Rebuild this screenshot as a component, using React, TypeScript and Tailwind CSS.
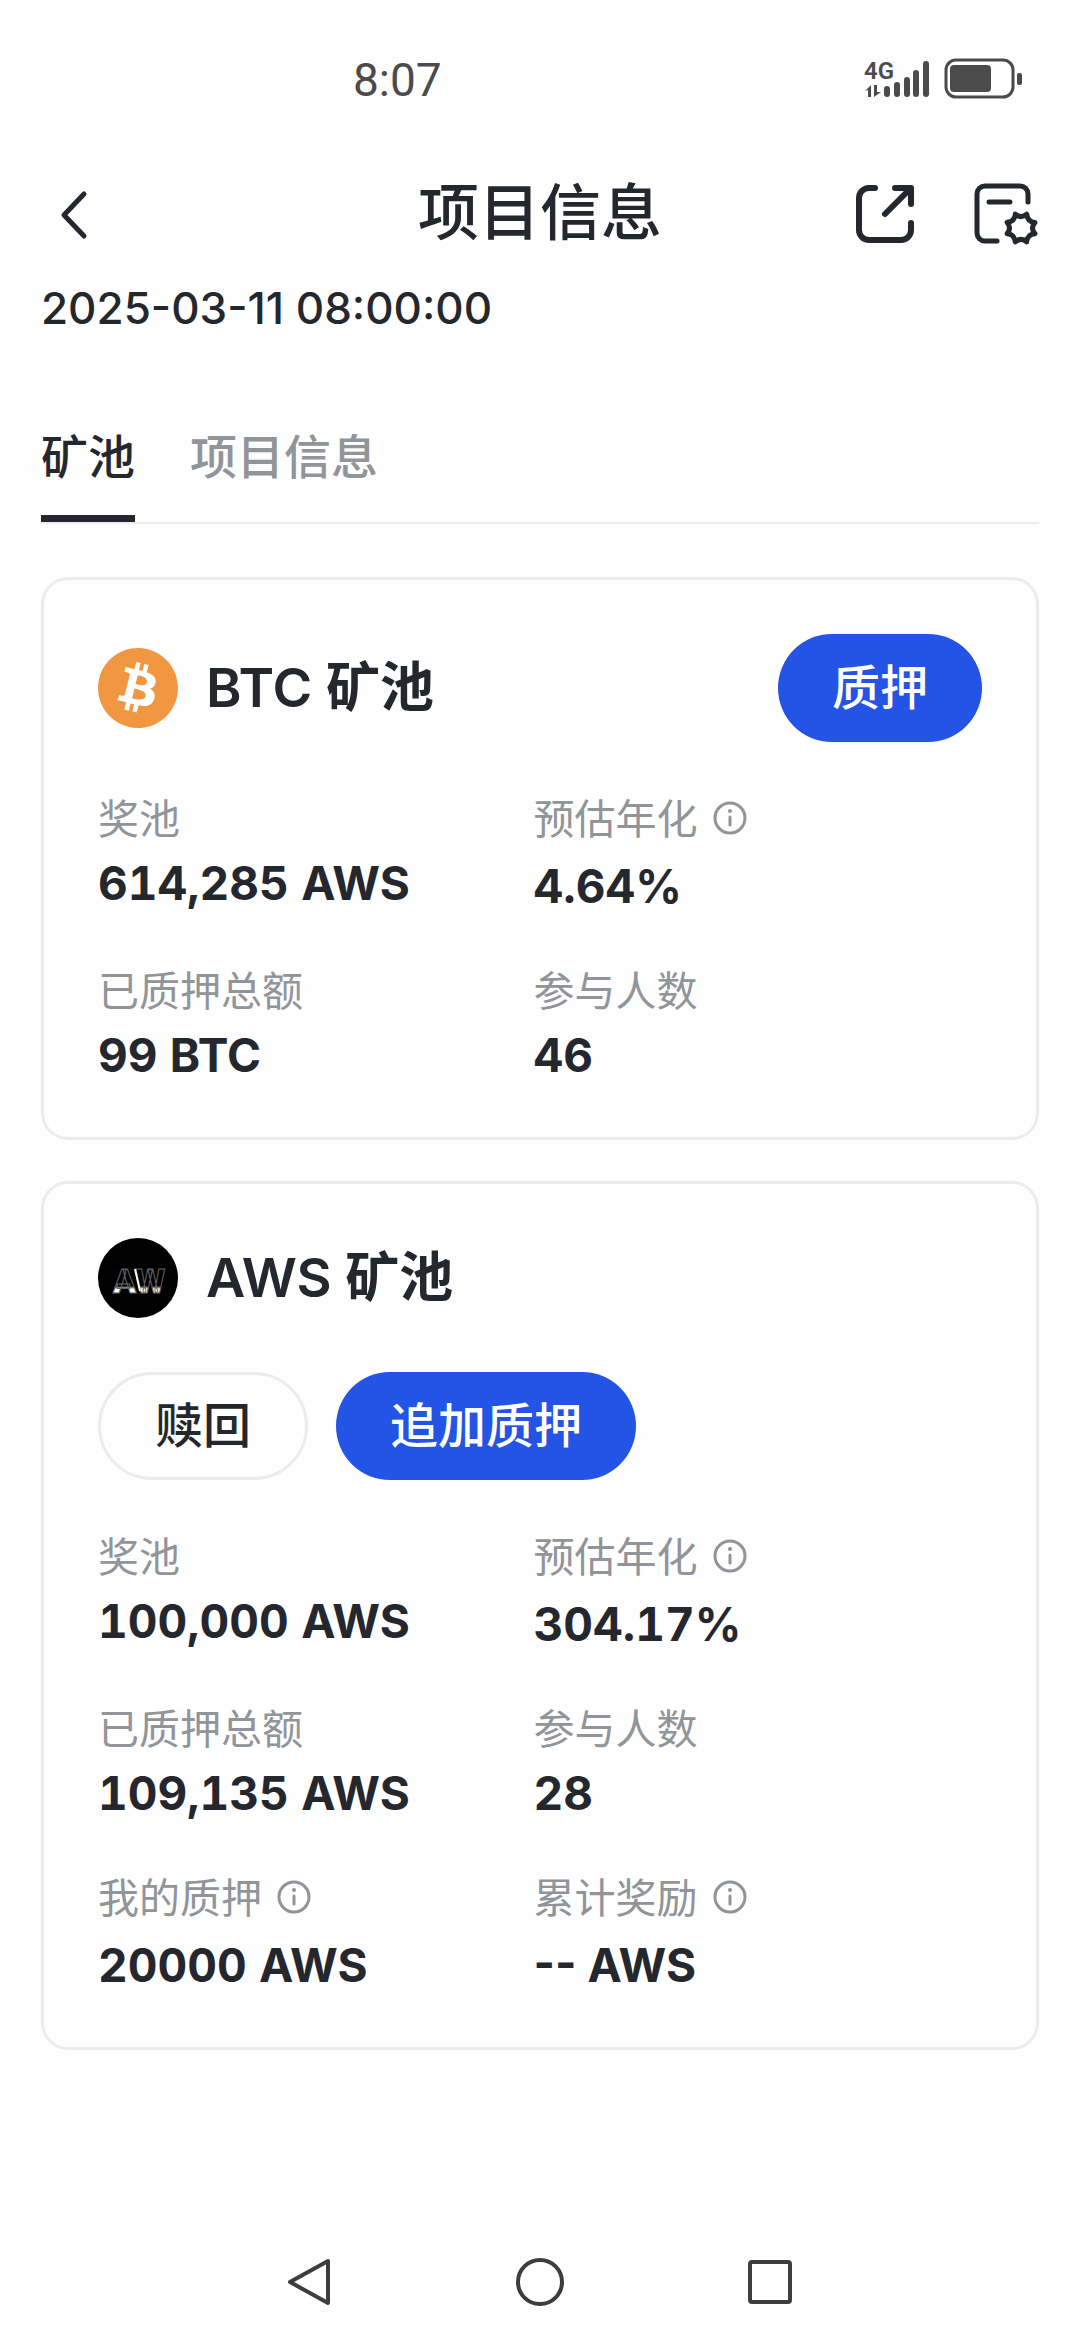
import { useState } from "react";
import type { ReactNode } from "react";
import { SiBitcoin } from "react-icons/si";

type Stat = { label: string; value: string; info?: boolean };

const btcStats: Stat[] = [
  { label: "奖池", value: "614,285 AWS" },
  { label: "预估年化", value: "4.64%", info: true },
  { label: "已质押总额", value: "99 BTC" },
  { label: "参与人数", value: "46" },
];

const awsStats: Stat[] = [
  { label: "奖池", value: "100,000 AWS" },
  { label: "预估年化", value: "304.17%", info: true },
  { label: "已质押总额", value: "109,135 AWS" },
  { label: "参与人数", value: "28" },
  { label: "我的质押", value: "20000 AWS", info: true },
  { label: "累计奖励", value: "-- AWS", info: true },
];

function StatusBar() {
  return (
    <div className="flex h-[160px] items-center justify-between pr-[58px] pl-[353px] text-[#4b4b4b]">
      <span className="font-[Roboto,sans-serif] text-[46px] leading-[54px]">8:07</span>
      <svg width="160" height="44" viewBox="861 58 160 44" fill="currentColor" aria-label="4G">
        <text x="863" y="79" fontSize="24" fontWeight="600" fontFamily="Roboto, sans-serif">
          4G
        </text>
        <path d="M864 91l6-6v12h-3v-7zM873 85h3v7h4l-7 5z" />
        <rect x="883" y="86" width="6" height="11" rx="3" />
        <rect x="893" y="82" width="6" height="15" rx="3" />
        <rect x="903" y="77" width="6" height="20" rx="3" />
        <rect x="912" y="70" width="6" height="27" rx="3" />
        <rect x="922" y="61" width="6" height="36" rx="3" />
        <rect x="945" y="60" width="67" height="37" rx="10" fill="none" stroke="currentColor" strokeWidth="3" />
        <rect x="949" y="65" width="41" height="27" rx="4" />
        <rect x="1016" y="73" width="5" height="12" rx="2" />
      </svg>
    </div>
  );
}

function Header() {
  return (
    <header className="grid h-[108px] grid-cols-[1fr_auto_1fr] items-center px-[41px]">
      <button type="button" aria-label="返回" className="justify-self-start pl-[18px]">
        <svg width="30" height="52" viewBox="0 0 30 52" fill="none" stroke="currentColor" strokeWidth="5" strokeLinecap="round" strokeLinejoin="round">
          <path d="M25 6L5 27l20 21" />
        </svg>
      </button>
      <h1 className="pb-[2px] text-[61px] leading-[80px] font-medium">项目信息</h1>
      <div className="flex gap-[58px] justify-self-end">
        <button type="button" aria-label="分享">
          <svg width="60" height="64" viewBox="855 182 60 64" fill="none" stroke="currentColor" strokeWidth="6" strokeLinecap="round" strokeLinejoin="round">
            <path d="M875 188h-6a10 10 0 0 0-10 10v32a10 10 0 0 0 10 10h32a10 10 0 0 0 10-10v-7M895 188h16v16M910 189l-25 25" />
          </svg>
        </button>
        <button type="button" aria-label="设置">
          <svg width="66" height="64" viewBox="973 182 66 64" fill="none" stroke="currentColor" strokeWidth="5" strokeLinecap="round" strokeLinejoin="round">
            <path d="M1028 202v-8a8 8 0 0 0-8-8h-35a8 8 0 0 0-8 8v39a8 8 0 0 0 8 8h12M989 202h21" />
            <path d="M1015.3 214.1Q1021 219 1026.7 214.1Q1027.6 222 1035 222.5Q1030 228 1034.9 233.7Q1027 234.6 1026.7 241.9Q1021 237 1015.3 241.9Q1014.4 234 1007.1 233.7Q1012 228 1007.1 222.3Q1015 221.4 1015.3 214.1z" />
          </svg>
        </button>
      </div>
    </header>
  );
}

function InfoIcon() {
  return (
    <svg width="36" height="36" viewBox="0 0 36 36" fill="none" stroke="currentColor" strokeWidth="3" strokeLinecap="round">
      <circle cx="18" cy="18" r="15" />
      <path d="M18 17v8" />
      <circle cx="18" cy="11" r="2" fill="currentColor" stroke="none" />
    </svg>
  );
}

function Stats({ items }: { items: Stat[] }) {
  return (
    <dl className="grid grid-cols-[34fr_35fr] gap-y-[54px]">
      {items.map((s) => (
        <div key={s.label} className="flex flex-col gap-[14px]">
          <dt className="flex items-start gap-[14px] text-[41px] leading-[46px] text-[#919498]">
            {s.label}
            {s.info && (
              <button type="button" aria-label={`${s.label}说明`} className="flex h-[49px] items-start pt-[4px]">
                <InfoIcon />
              </button>
            )}
          </dt>
          <dd
            className={
              s.value.startsWith("--")
                ? "text-[46px] leading-[55px] font-bold"
                : "text-[46px] leading-[55px] font-bold tabular-nums"
            }
          >
            {s.value}
          </dd>
        </div>
      ))}
    </dl>
  );
}

function AwLogo() {
  return (
    <svg width="80" height="80" viewBox="0 0 80 80" aria-hidden="true">
      <defs>
        <linearGradient id="aw" gradientUnits="userSpaceOnUse" x1="0" y1="48" x2="0" y2="51">
          <stop offset="0" stopColor="#000" />
          <stop offset="1" stopColor="#fff" />
        </linearGradient>
      </defs>
      <circle cx="40" cy="40" r="40" fill="#000" />
      <text x="15" y="55" fontFamily="Roboto, sans-serif" fontWeight="900" fontSize="34" fill="url(#aw)" stroke="#666" strokeWidth="1">
        AW
      </text>
      <path d="M37 31l5 22" stroke="#fff" strokeWidth="2" />
    </svg>
  );
}

function Card({ children }: { children: ReactNode }) {
  return (
    <section className="flex flex-col gap-[54px] rounded-[27px] border-[3px] border-[#ebecee] p-[54px]">
      {children}
    </section>
  );
}

function PrimaryButton({ children }: { children: ReactNode }) {
  return (
    <button type="button" className="h-[108px] rounded-full bg-[#2354e6] px-[54px] text-[48px] leading-[56px] font-medium text-white">
      {children}
    </button>
  );
}

const tabs = ["矿池", "项目信息"];

export default function App() {
  const [active, setActive] = useState(tabs[0]);
  return (
    <div className="flex min-h-screen flex-col bg-[#fefefe] font-[Inter,'Noto_Sans_CJK_SC',sans-serif] text-[#25272e]">
      <StatusBar />
      <Header />
      <main className="flex grow flex-col px-[41px]">
        <time className="mt-[12px] text-[44px] leading-[56px] font-medium">2025-03-11 08:00:00</time>
        <div role="tablist" className="mt-[93px] flex gap-[55px] border-b-2 border-[#ededef]">
          {tabs.map((t) => (
            <button
              key={t}
              type="button"
              role="tab"
              aria-selected={t === active}
              onClick={() => setActive(t)}
              className={
                t === active
                  ? "border-b-[7px] border-[#25272e] pb-[30px] text-[47px] leading-[56px] font-medium"
                  : "border-b-[7px] border-transparent pb-[30px] text-[47px] leading-[56px] font-medium text-[#919498]"
              }
            >
              {t}
            </button>
          ))}
        </div>
        <div className="mt-[53px] flex flex-col gap-[41px]">
          <Card>
            <div className="flex items-center justify-between">
              <div className="flex items-center gap-[28px]">
                <SiBitcoin size={80} color="#f19641" aria-hidden="true" />
                <h2 className="text-[54px] leading-[80px] font-semibold">BTC 矿池</h2>
              </div>
              <PrimaryButton>质押</PrimaryButton>
            </div>
            <Stats items={btcStats} />
          </Card>
          <Card>
            <div className="flex items-center gap-[28px]">
              <AwLogo />
              <h2 className="text-[54px] leading-[80px] font-semibold">AWS 矿池</h2>
            </div>
            <div className="flex gap-[28px]">
              <button type="button" className="h-[108px] rounded-full border-[3px] border-[#ebecee] px-[54px] text-[48px] leading-[56px] font-medium">
                赎回
              </button>
              <PrimaryButton>追加质押</PrimaryButton>
            </div>
            <Stats items={awsStats} />
          </Card>
        </div>
      </main>
      <nav className="flex justify-center gap-[182px] pt-[40px] pb-[34px] text-[#3d3d3d]">
        <button type="button" aria-label="后退">
          <svg width="48" height="48" viewBox="0 0 48 48" fill="none" stroke="currentColor" strokeWidth="4" strokeLinejoin="round">
            <path d="M42 3v42L4 24z" />
          </svg>
        </button>
        <button type="button" aria-label="主页">
          <svg width="48" height="48" viewBox="0 0 48 48" fill="none" stroke="currentColor" strokeWidth="4">
            <circle cx="24" cy="24" r="22" />
          </svg>
        </button>
        <button type="button" aria-label="最近任务">
          <svg width="48" height="48" viewBox="0 0 48 48" fill="none" stroke="currentColor" strokeWidth="4">
            <rect x="4" y="4" width="40" height="40" rx="2" />
          </svg>
        </button>
      </nav>
    </div>
  );
}
